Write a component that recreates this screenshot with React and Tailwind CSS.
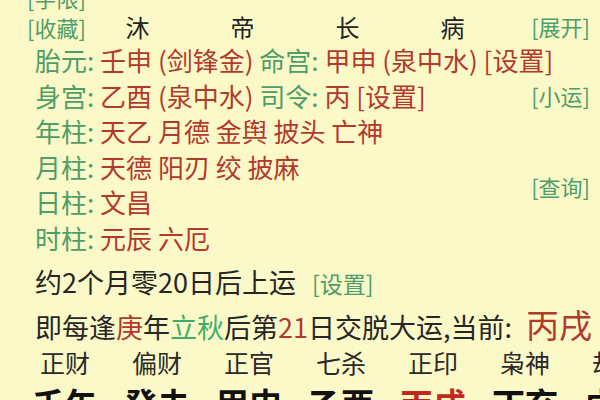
const green = "text-[#4d9e69]";
const red = "text-[#b3392d]";

function InfoRow({ label, children }) {
  return (
    <div className="h-[35.6px] leading-[35.6px] pl-[35px] text-[26px] whitespace-nowrap">
      <span className={green}>{label}: </span>
      <span className={red}>{children}</span>
    </div>
  );
}

export default function App() {
  const dayun = [
    ["正财", "壬午"],
    ["偏财", "癸未"],
    ["正官", "甲申"],
    ["七杀", "乙酉"],
    ["正印", "丙戌"],
    ["枭神", "丁亥"],
    ["劫财", "戊子"],
  ];

  return (
    <div className="w-[600px] h-[400px] overflow-hidden bg-[#fcf9c8] text-[#262626] font-['Noto_Sans_CJK_SC',sans-serif]">
      <div className="flex">
        <div className="flex-1 min-w-0 flex flex-col">
          <div className={`mt-[-18px] h-[30px] leading-[30px] pl-[27px] text-[22px] whitespace-nowrap ${green}`}>[字限]</div>
          <div className="h-[30px] leading-[30px] pl-[27px] flex items-center whitespace-nowrap">
            <span className={`w-[58px] shrink-0 text-[22px] ${green}`}>[收藏]</span>
            <div className="grid grid-cols-[repeat(4,105px)] text-center text-[24px] text-[#222]">
              <span>沐</span>
              <span>帝</span>
              <span>长</span>
              <span>病</span>
            </div>
          </div>
          <InfoRow label="胎元">
            壬申 (剑锋金) <span className={green}>命宫: </span>甲申 (泉中水) [设置]
          </InfoRow>
          <InfoRow label="身宫">
            乙酉 (泉中水) <span className={green}>司令: </span>丙 [设置]
          </InfoRow>
          <InfoRow label="年柱">天乙 月德 金舆 披头 亡神</InfoRow>
          <InfoRow label="月柱">天德 阳刃 绞 披麻</InfoRow>
          <InfoRow label="日柱">文昌</InfoRow>
          <InfoRow label="时柱">元辰 六厄</InfoRow>
        </div>
        <div className={`w-[80px] shrink-0 flex flex-col items-end pr-[10px] text-[22px] whitespace-nowrap ${green}`}>
          <div className="mt-[11px] h-[30px] leading-[30px]">[展开]</div>
          <div className="mt-[39px] h-[30px] leading-[30px]">[小运]</div>
          <div className="mt-[61px] h-[30px] leading-[30px]">[查询]</div>
        </div>
      </div>

      <div className="mt-[4px] h-[43px] leading-[43px] pl-[35px] text-[27px] whitespace-nowrap">
        约2个月零20日后上运 <span className={`ml-[10px] text-[23px] ${green}`}>[设置]</span>
      </div>
      <div className="h-[43px] leading-[43px] pl-[35px] text-[27px] whitespace-nowrap">
        即每逢<span className={red}>庚</span>年<span className="text-[#3fae6a]">立秋</span>后第
        <span className={red}>21</span>日交脱大运,当前:<span className={`ml-[14px] text-[33px] ${red}`}>丙戌</span>
      </div>
      <div className="grid grid-cols-[repeat(7,92px)] pl-[19px] text-center whitespace-nowrap">
        {dayun.map(([god]) => (
          <div key={god} className="h-[32px] leading-[32px] text-[25px] text-[#2a2a2a]">
            {god}
          </div>
        ))}
        {dayun.map(([, gz]) => (
          <div
            key={gz}
            className={`mt-[5px] h-[40px] leading-[40px] text-[33px] font-bold ${gz === "丙戌" ? "text-[#c0281e]" : "text-[#111]"}`}
          >
            {gz}
          </div>
        ))}
      </div>
    </div>
  );
}
